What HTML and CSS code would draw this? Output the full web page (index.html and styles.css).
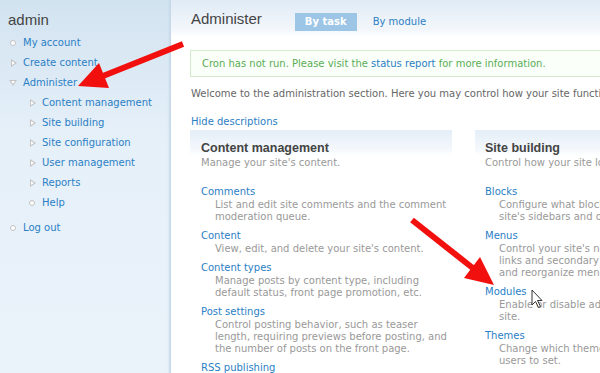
FILE: index.html
```html
<!DOCTYPE html>
<html lang="en">
<head>
  <meta charset="UTF-8" />
  <meta name="viewport" content="width=device-width, initial-scale=1.0"/>
  <title>Administer</title>
  <link rel="stylesheet" href="styles.css">
</head>
<body>
  <div class="page">
    <aside class="sidebar">
      <h2>admin</h2>
      <ul class="menu">
        <li class="leaf"><a href="#">My account</a></li>
        <li class="collapsed"><a href="#">Create content</a></li>
        <li class="expanded"><a href="#">Administer</a>
          <ul class="menu">
            <li class="collapsed"><a href="#">Content management</a></li>
            <li class="collapsed"><a href="#">Site building</a></li>
            <li class="collapsed"><a href="#">Site configuration</a></li>
            <li class="collapsed"><a href="#">User management</a></li>
            <li class="collapsed"><a href="#">Reports</a></li>
            <li class="leaf"><a href="#">Help</a></li>
          </ul>
        </li>
        <li class="leaf"><a href="#">Log out</a></li>
      </ul>
    </aside>

    <main class="main">
      <div class="header">
        <h1>Administer</h1>
        <ul class="tabs">
          <li class="active"><a href="#">By task</a></li>
          <li><a href="#">By module</a></li>
        </ul>
      </div>

      <div class="messages">
        Cron has not run. Please visit the <a href="#">status report</a> for more information.
      </div>

      <p class="welcome">Welcome to the administration section. Here you may control how your site functions.</p>

      <a class="toggle" href="#">Hide descriptions</a>

      <div class="panels">
        <div class="panel">
          <h3>Content management</h3>
          <div class="panel-desc">Manage your site's content.</div>
          <dl class="admin-list">
            <dt><a href="#">Comments</a></dt>
            <dd>List and edit site comments and the comment moderation queue.</dd>
            <dt><a href="#">Content</a></dt>
            <dd>View, edit, and delete your site's content.</dd>
            <dt><a href="#">Content types</a></dt>
            <dd>Manage posts by content type, including default status, front page promotion, etc.</dd>
            <dt><a href="#">Post settings</a></dt>
            <dd>Control posting behavior, such as teaser length, requiring previews before posting, and the number of posts on the front page.</dd>
            <dt><a href="#">RSS publishing</a></dt>
            <dd>Configure the number of items per feed and whether feeds should be titles/teasers/full-text.</dd>
          </dl>
        </div>
        <div class="panel">
          <h3>Site building</h3>
          <div class="panel-desc">Control how your site looks and feels.</div>
          <dl class="admin-list">
            <dt><a href="#">Blocks</a></dt>
            <dd>Configure what block content appears in your site's sidebars and other regions.</dd>
            <dt><a href="#">Menus</a></dt>
            <dd>Control your site's navigation menu, primary links and secondary links. as well as rename and reorganize menu items.</dd>
            <dt><a href="#">Modules</a></dt>
            <dd>Enable or disable add-on modules for your site.</dd>
            <dt><a href="#">Themes</a></dt>
            <dd>Change which theme your site uses or allows users to set.</dd>
          </dl>
        </div>
      </div>
    </main>
  </div>

  <!-- annotation arrows and mouse pointer drawn over the screenshot -->
  <svg class="overlay" width="600" height="373" viewBox="0 0 600 373">
    <g fill="#f2100f" stroke="#f2100f">
      <line x1="183" y1="44" x2="103" y2="76" stroke-width="6"/>
      <polygon points="78,86 99,63 109,88" stroke="none"/>
      <line x1="412" y1="220" x2="474" y2="269" stroke-width="6"/>
      <polygon points="494,285 464,278 480,257" stroke="none"/>
    </g>
    <path d="M532 290 L532 305 L535.5 301.5 L538.5 307.5 L540.5 306.5 L537.5 300.5 L542 300.5 Z" fill="#fff" stroke="#333" stroke-width="1"/>
  </svg>
</body>
</html>
```

FILE: styles.css
```css
body {
  font-family: 'DejaVu Sans', Verdana, sans-serif;
  font-size: 10px;
  margin: 0;
  padding: 0;
  color: #666;
  background-color: #fff;
  width: 600px;
  height: 373px;
  overflow: hidden;
  position: relative;
}
a {
  color: #2b80c5;
  text-decoration: none;
}
.page {
  display: flex;
  min-height: 373px;
}

/* left sidebar */
.sidebar {
  flex: 0 0 171px;
  background: linear-gradient(#d2e3f0, #e6f0f9 140px, #ebf3fa);
  box-shadow: inset -3px 0 2px -1px #c6d9e9;
}
.sidebar h2 {
  margin: 10px 0 0 8px;
  font: 15px/20px 'Liberation Sans', Arial, sans-serif;
  color: #444;
}
.menu {
  list-style: none;
  margin: 3px 0 0;
  padding: 0 0 0 23px;
}
.menu .menu {
  margin: 0 0 5px;
  padding-left: 19px;
}
.menu li {
  position: relative;
  line-height: 20px;
}
.menu li::before,
.menu li::after {
  content: '';
  position: absolute;
}
.menu .leaf::before {
  left: -13px;
  top: 7px;
  width: 4px;
  height: 4px;
  border: 1px solid #c2c2c2;
  border-radius: 50%;
  background: #fff;
}
.menu .collapsed::before {
  left: -12px;
  top: 6px;
  border-top: 4px solid transparent;
  border-bottom: 4px solid transparent;
  border-left: 6px solid #c4c4c4;
}
.menu .collapsed::after {
  left: -11px;
  top: 8px;
  border-top: 2px solid transparent;
  border-bottom: 2px solid transparent;
  border-left: 3px solid #fff;
}
.menu .expanded::before {
  left: -14px;
  top: 7px;
  border-left: 4px solid transparent;
  border-right: 4px solid transparent;
  border-top: 6px solid #c4c4c4;
}
.menu .expanded::after {
  left: -12px;
  top: 8px;
  border-left: 2px solid transparent;
  border-right: 2px solid transparent;
  border-top: 3px solid #fff;
}

/* main column */
.main {
  flex: 1;
  min-width: 0;
  padding-left: 19px;
  background: linear-gradient(#e0ebf6, #f3f7fb 30px, #fff 37px) no-repeat;
  background-size: 100% 40px;
}
.header {
  display: flex;
  align-items: flex-start;
  height: 37px;
}
.header h1 {
  margin: 0 0 0 1px;
  padding-top: 10px;
  font: 15px/18px 'Liberation Sans', Arial, sans-serif;
  color: #444;
}
.tabs {
  display: flex;
  gap: 6px;
  list-style: none;
  margin: 13px 0 0 33px;
  padding: 0;
}
.tabs a {
  display: block;
  padding: 0 10px;
  line-height: 18px;
}
.tabs .active a {
  background-color: #9cc5e6;
  color: #fff;
  font-weight: bold;
}
.messages {
  width: 560px;
  margin-top: 13px;
  padding: 6px 11px;
  line-height: 13px;
  border: 1px solid #d2ebcc;
  background-color: #fbfffa;
  color: #5aad55;
  white-space: nowrap;
}
.welcome {
  margin: 10px 0 0 1px;
  line-height: 14px;
  color: #666;
  white-space: nowrap;
}
.toggle {
  display: block;
  margin: 14px 0 0 1px;
  line-height: 14px;
}

/* admin panels */
.panels {
  display: flex;
  gap: 23px;
  margin-top: 1px;
}
.panel {
  flex: 0 0 262px;
  box-sizing: border-box;
  padding: 0 5px 0 11px;
  background: linear-gradient(#e4eef7, #f3f7fb 18px, #fff 26px) no-repeat;
  background-size: 100% 26px;
}
.panel + .panel {
  padding-left: 10px;
}
.panel h3 {
  margin: 0;
  padding-top: 10px;
  font: bold 12.5px/16px 'Liberation Sans', Arial, sans-serif;
  color: #444;
}
.panel-desc {
  line-height: 14px;
  color: #999;
  white-space: nowrap;
}
.admin-list {
  margin: 15px 0 0;
}
.admin-list dt {
  line-height: 14px;
}
.admin-list dd {
  margin: 0 0 6px 14px;
  line-height: 12px;
  color: #999;
}

.overlay {
  position: absolute;
  top: 0;
  left: 0;
  pointer-events: none;
}
```
